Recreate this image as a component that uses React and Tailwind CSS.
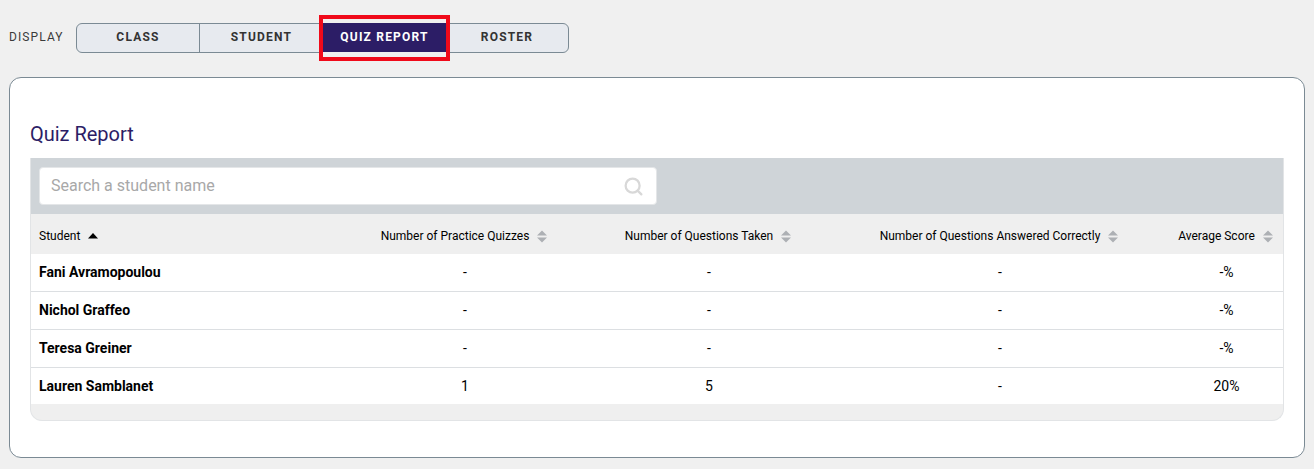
import { Search } from "lucide-react";

const tabs = ["CLASS", "STUDENT", "QUIZ REPORT", "ROSTER"];

const rows = [
  { name: "Fani Avramopoulou", quizzes: "-", taken: "-", correct: "-", score: "-%" },
  { name: "Nichol Graffeo", quizzes: "-", taken: "-", correct: "-", score: "-%" },
  { name: "Teresa Greiner", quizzes: "-", taken: "-", correct: "-", score: "-%" },
  { name: "Lauren Samblanet", quizzes: "1", taken: "5", correct: "-", score: "20%" },
];

const columns = [
  { label: "Number of Practice Quizzes", width: "w-[244px]" },
  { label: "Number of Questions Taken", width: "w-[244px]" },
  { label: "Number of Questions Answered Correctly", width: "w-[338px]" },
  { label: "Average Score", width: "w-[115px]" },
];

const SortIcon = () => (
  <svg width="10" height="13" viewBox="0 0 10 13" className="ml-2 shrink-0 fill-[#adb0b4]">
    <path d="M5 0.5 L10 5.5 H0 Z" />
    <path d="M5 12.5 L10 7.5 H0 Z" />
  </svg>
);

const App = () => {
  return (
    <div className="min-h-[469px] bg-[#f0f0f0] px-[9px] pt-[23px] font-['Roboto',sans-serif]">
      {/* DISPLAY TABS */}
      <div className="flex items-center">
        <span className="w-[67px] pb-[2px] text-xs tracking-[1.1px] text-[#3b3b3b]">DISPLAY</span>
        <div className="flex h-[30px] w-[493px] rounded-md border border-[#7b8a94] bg-[#e7eaef]">
          {tabs.map((tab, i) => {
            const active = tab === "QUIZ REPORT";
            return (
              <button
                key={tab}
                className={
                  (i === 0 ? "w-[123px] border-r border-[#7b8a94] " : "") +
                  (i === 1 ? "w-[123px] " : "") +
                  (i === 2 ? "relative -my-px w-[123px] border-b border-[#f0f0f0] " : "") +
                  (i === 3 ? "flex-1 " : "") +
                  "pb-[2px] text-xs font-bold tracking-[1.2px] " +
                  (active ? "bg-[#2c1d66] text-white" : "text-[#333333]")
                }
              >
                {tab}
                {active && (
                  <span className="absolute -inset-x-[4px] -top-[8px] -bottom-[9px] border-[4px] border-[#f00a1a]" />
                )}
              </button>
            );
          })}
        </div>
      </div>

      {/* CARD */}
      <div className="mt-[24px] h-[381px] rounded-xl border border-[#7b8a94] bg-white px-5 pt-[43px]">
        <h2 className="h-[37px] text-xl leading-[26px] tracking-[-0.02px] text-[#2c1d66]">Quiz Report</h2>

        <div className="overflow-hidden rounded-b-xl border-x border-b border-[#e2e4e6] bg-[#efefef] pb-4">
          <div className="-mx-px bg-[#cfd4d8] p-[9px]">
            <div className="flex h-[38px] w-[618px] items-center justify-between rounded border border-[#e4e6e8] bg-white pl-[11px] pr-[12px]">
              <span className="text-base text-[#a8a8a8]">Search a student name</span>
              <Search size={21} strokeWidth={2.6} className="text-[#d8d8d8]" />
            </div>
          </div>

          <table className="w-full table-fixed border-separate border-spacing-0 text-sm text-black">
            <thead>
              <tr className="h-10 bg-[#efefef] text-xs">
                <th className="pl-2 pt-1 text-left font-normal">
                  <span className="flex items-center">
                    Student
                    <svg width="10" height="6" viewBox="0 0 10 6" className="ml-2 fill-black">
                      <path d="M5 0 L10 5.5 H0 Z" />
                    </svg>
                  </span>
                </th>
                {columns.map((col) => (
                  <th key={col.label} className={col.width + " pt-1 font-normal"}>
                    <span className="flex items-center justify-center">
                      {col.label}
                      <SortIcon />
                    </span>
                  </th>
                ))}
              </tr>
            </thead>
            <tbody>
              {rows.map((row, i) => {
                const cell = i < 3 ? "h-[38px] border-b border-[#dcdfe2] pb-[2px] " : "h-[36px] ";
                return (
                  <tr key={row.name} className="bg-white">
                    <td className={cell + "pl-2 font-bold"}>{row.name}</td>
                    <td className={cell + "pl-[2px] text-center"}>{row.quizzes}</td>
                    <td className={cell + "pl-[2px] text-center"}>{row.taken}</td>
                    <td className={cell + "pl-[2px] text-center"}>{row.correct}</td>
                    <td className={cell + "pl-[2px] text-center"}>{row.score}</td>
                  </tr>
                );
              })}
            </tbody>
          </table>
        </div>
      </div>
    </div>
  );
};

export default App;
